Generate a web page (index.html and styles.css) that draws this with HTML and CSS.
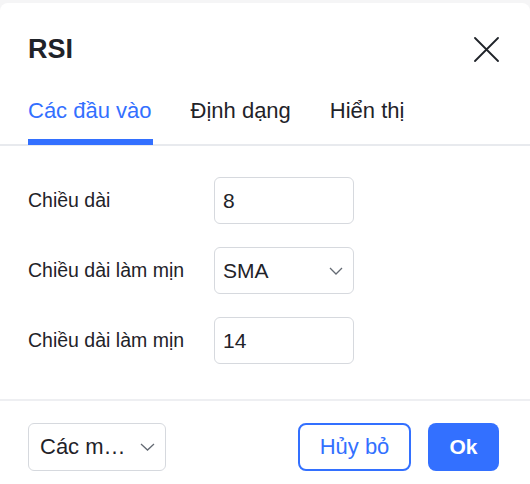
FILE: index.html
```html
<!DOCTYPE html>
<html lang="vi">
<head>
<meta charset="utf-8">
<title>RSI</title>
<link rel="stylesheet" href="styles.css">
</head>
<body>
<div class="dialog">
  <div class="header">
    <div class="title">RSI</div>
    <button class="close" aria-label="Đóng">
      <svg width="25" height="25" viewBox="0 0 25 25"><path d="M1 1 L24 24 M24 1 L1 24" stroke="#1f2329" stroke-width="1.8" fill="none" stroke-linecap="round"/></svg>
    </button>
  </div>
  <div class="tabs">
    <div class="tab active">Các đầu vào</div>
    <div class="tab">Định dạng</div>
    <div class="tab">Hiển thị</div>
  </div>
  <div class="body">
    <div class="row">
      <div class="label">Chiều dài</div>
      <div class="field">8</div>
    </div>
    <div class="row">
      <div class="label">Chiều dài làm mịn</div>
      <div class="field select">
        <span>SMA</span>
        <svg class="chev" width="14" height="8" viewBox="0 0 14 8"><path d="M1 1 L7 7 L13 1" stroke="#646a73" stroke-width="1.3" fill="none"/></svg>
      </div>
    </div>
    <div class="row">
      <div class="label">Chiều dài làm mịn</div>
      <div class="field">14</div>
    </div>
  </div>
  <div class="footer">
    <div class="field select preset">
      <span>Các m…</span>
      <svg class="chev" width="15" height="8" viewBox="0 0 15 8"><path d="M1 1 L7.5 7 L14 1" stroke="#646a73" stroke-width="1.3" fill="none"/></svg>
    </div>
    <div class="actions">
      <button class="btn cancel">Hủy bỏ</button>
      <button class="btn ok">Ok</button>
    </div>
  </div>
</div>
</body>
</html>
```

FILE: styles.css
```css
* { box-sizing: border-box; }
html, body { margin: 0; padding: 0; }
body {
  background: #f5f5f6;
  font-family: "Liberation Sans", Arial, sans-serif;
  color: #1f2329;
  width: 530px;
  height: 484px;
  overflow: hidden;
}
.dialog {
  margin-top: 3px;
  background: #fff;
  border-radius: 8px 8px 0 0;
  height: 481px;
}
.header {
  display: flex;
  align-items: center;
  justify-content: space-between;
  padding: 28px 31px 0 28px;
}
.title {
  font-size: 27px;
  font-weight: bold;
  line-height: 36px;
}
.close {
  border: 0;
  background: none;
  padding: 0;
  width: 25px;
  height: 25px;
  display: flex;
}
.tabs {
  display: flex;
  gap: 39px;
  margin-top: 29px;
  padding-left: 28px;
  border-bottom: 2px solid #e8eaee;
}
.tab {
  position: relative;
  font-size: 22px;
  line-height: 30px;
  padding-bottom: 18px;
  color: #1f2329;
}
.tab.active { color: #3370ff; }
.tab.active::after {
  content: "";
  position: absolute;
  left: 0;
  right: -1px;
  bottom: -1px;
  height: 6px;
  background: #3370ff;
}
.body {
  padding: 31px 31px 35px 28px;
  display: flex;
  flex-direction: column;
  gap: 23px;
  border-bottom: 2px solid #eeeff2;
}
.row {
  display: grid;
  grid-template-columns: 186px 140px;
  align-items: center;
}
.label {
  font-size: 19.5px;
  color: #1f2329;
}
.field {
  height: 47px;
  border: 1px solid #d6d9de;
  border-radius: 6px;
  padding: 0 10px 0 8px;
  font-size: 21px;
  display: flex;
  align-items: center;
  color: #1f2329;
}
.select { justify-content: space-between; }
.footer {
  display: flex;
  justify-content: space-between;
  align-items: center;
  padding: 22px 31px 0 28px;
}
.preset {
  width: 138px;
  height: 48px;
  font-size: 22px;
  padding: 0 10px 0 11px;
}
.actions {
  display: flex;
  gap: 17px;
}
.btn {
  font-family: "Liberation Sans", Arial, sans-serif;
  height: 48px;
  border-radius: 8px;
  font-size: 22px;
  cursor: pointer;
}
.cancel {
  width: 113px;
  border: 2px solid #3370ff;
  background: #fff;
  color: #3370ff;
}
.ok {
  width: 71px;
  border: 0;
  background: #3370ff;
  color: #fff;
  font-weight: bold;
  font-size: 21px;
}
```
